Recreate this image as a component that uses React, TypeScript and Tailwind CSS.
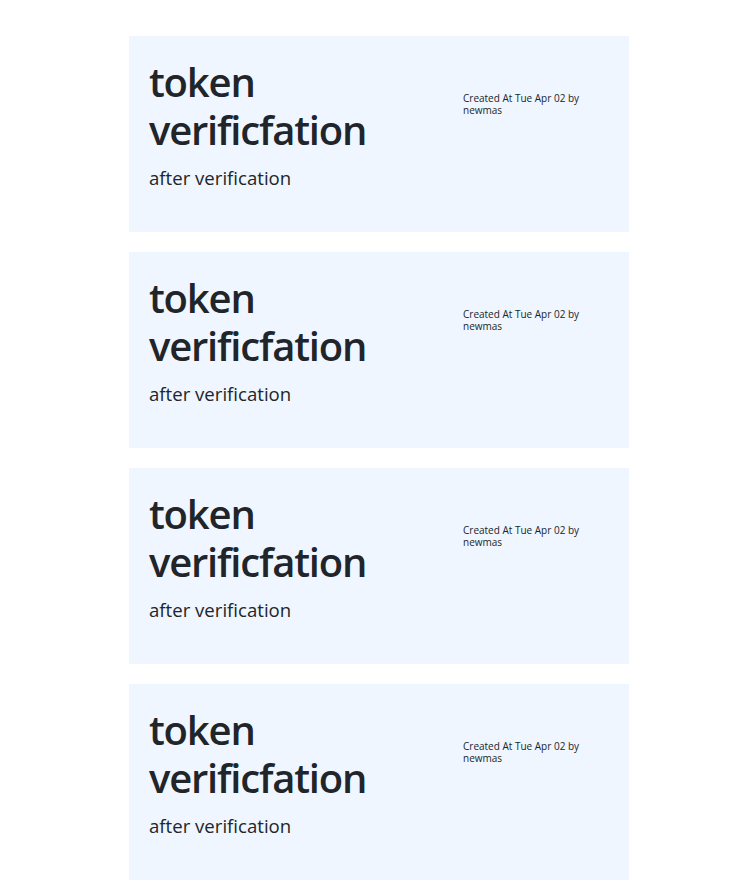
export default function App() {
  const items = [0, 1, 2, 3];
  return (
    <div className="flex flex-col items-start gap-5 pt-9 pb-3 pl-[129px] bg-white" style={{ fontFamily: '"Open Sans", sans-serif' }}>
      {items.map((i) => (
        <div key={i} className="w-[500px] h-[196px] bg-[#eff6ff] flex px-5 pt-[22px] text-[#212529]">
          <div className="w-[314px] shrink-0">
            <h1 className="text-[40px] leading-[48px] font-semibold mb-[9px] tracking-[-1.2px]">token verificfation</h1>
            <p className="text-[18.6px] leading-[30px]">after verification</p>
          </div>
          <div className="mt-[34px] text-[10px] leading-[12px] w-[130px]">
            Created At Tue Apr 02 by newmas
          </div>
        </div>
      ))}
    </div>
  );
}
